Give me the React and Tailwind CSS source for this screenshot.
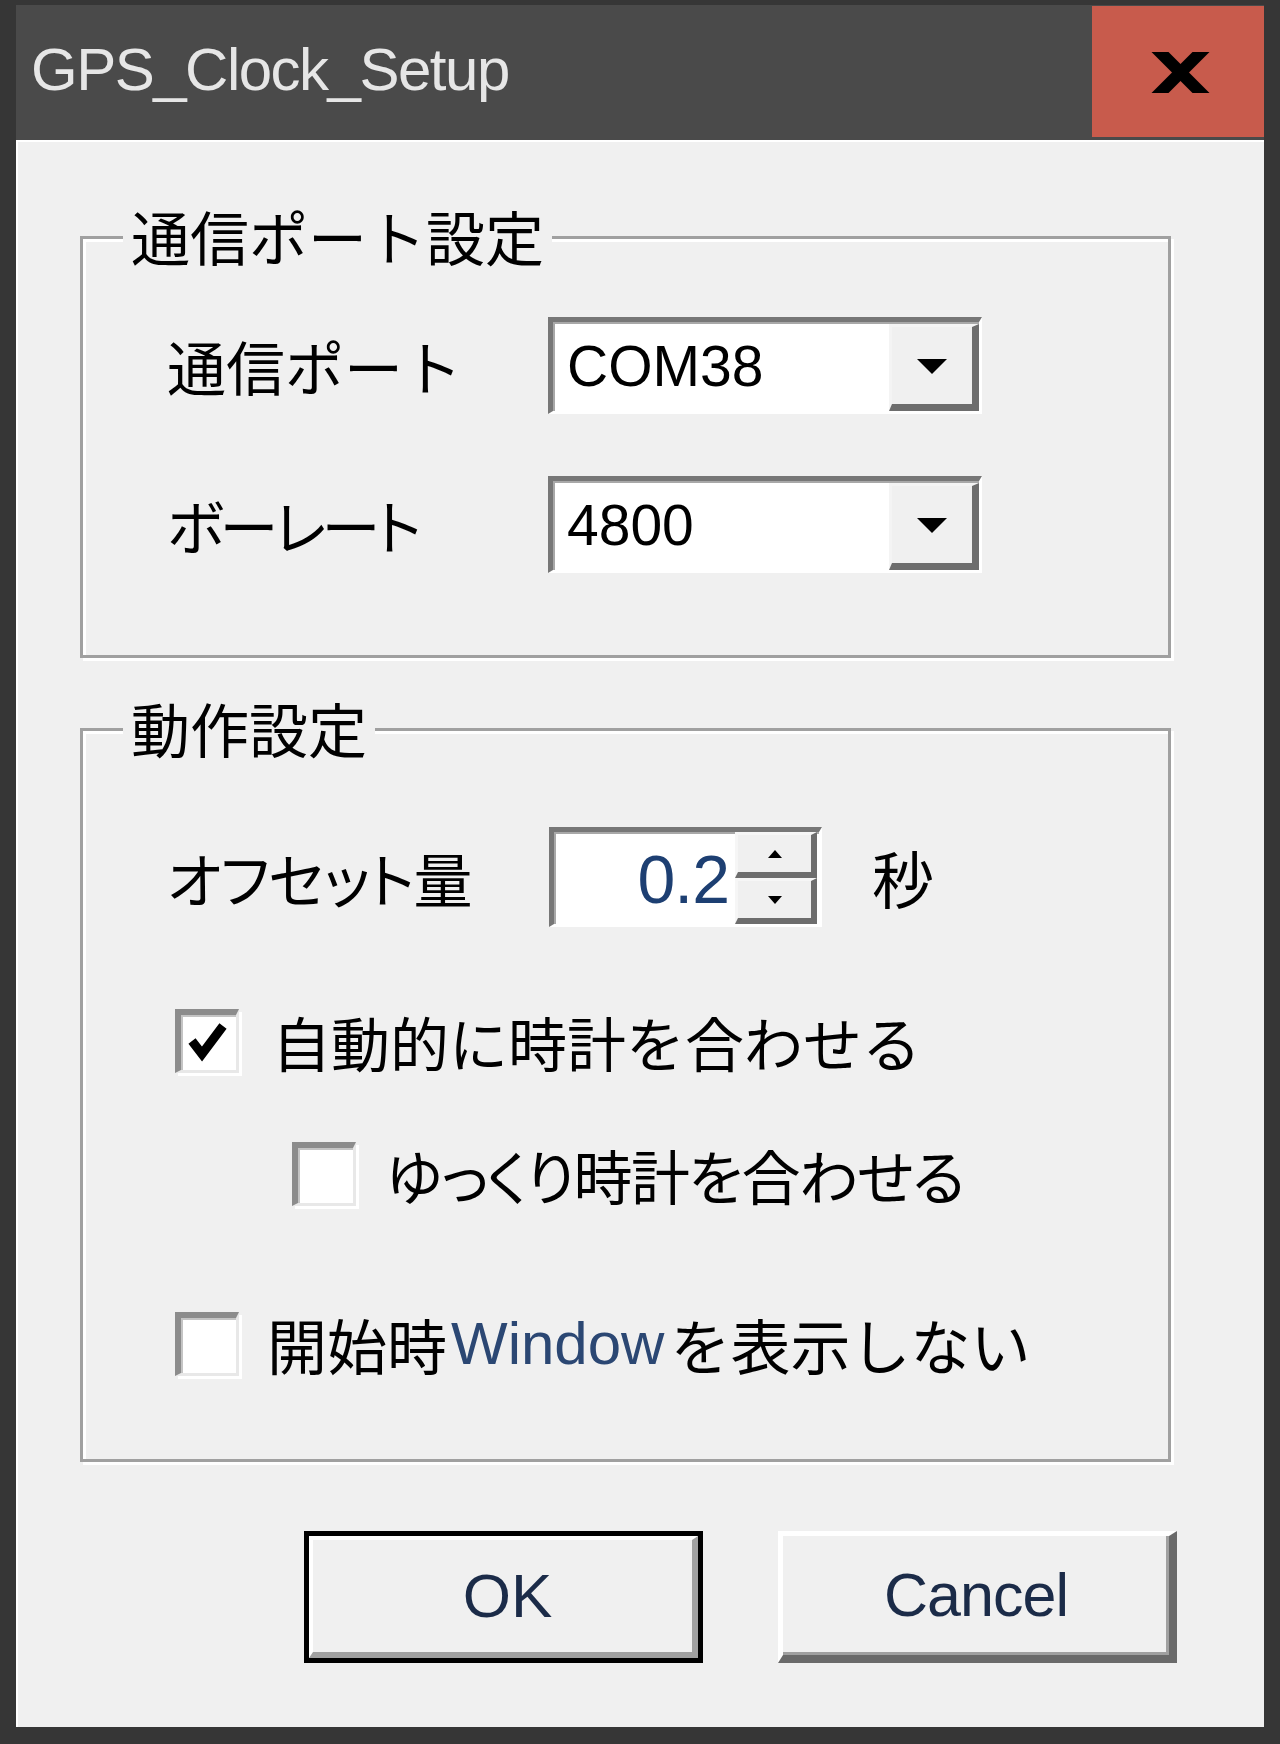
const CJK = "font-['Noto_Sans_CJK_JP',sans-serif] font-normal text-black leading-none";
const LAT = "font-['Liberation_Sans',sans-serif] leading-none";

function Arrow({ w = 30, h = 15 }) {
  return (
    <svg width={w} height={h} viewBox={`0 0 ${w} ${h}`}>
      <polygon points={`0,0 ${w},0 ${w / 2},${h}`} fill="#000" />
    </svg>
  );
}

function Combo({ value }) {
  return (
    <div className="w-[434px] h-[97px] flex bg-white border-t-[5px] border-l-[5px] border-t-[#777777] border-l-[#777777] border-b-[3px] border-r-[3px] border-b-white border-r-white shadow-[inset_2px_2px_0_#a8a8a8]">
      <div className={`flex-1 flex items-center pl-[14px] text-[57px] text-black ${LAT}`}>{value}</div>
      <div className="w-[90px] mt-[2px] bg-[#f0f0f0] border-t-[3px] border-l-[3px] border-t-[#f4f4f4] border-l-[#f4f4f4] border-b-[7px] border-r-[7px] border-b-[#6d6d6d] border-r-[#6d6d6d] flex items-center justify-center">
        <div className="mt-[2px]">
          <Arrow w={30} h={15} />
        </div>
      </div>
    </div>
  );
}

function Spin({ value }) {
  return (
    <div className="w-[273px] h-[100px] flex bg-white border-t-[5px] border-l-[5px] border-t-[#777777] border-l-[#777777] border-b-[3px] border-r-[3px] border-b-white border-r-white shadow-[inset_2px_2px_0_#a8a8a8]">
      <div className={`flex-1 flex items-center justify-end pr-[6px] pt-[2px] text-[68px] tracking-[-1px] text-[#1d3f72] ${LAT}`}>{value}</div>
      <div className="w-[82px] flex flex-col mr-[2px]">
        <div className="flex-1 bg-[#f0f0f0] border-t-[3px] border-l-[3px] border-t-[#f6f6f6] border-l-[#f6f6f6] border-b-[6px] border-r-[6px] border-b-[#6d6d6d] border-r-[#6d6d6d] flex items-center justify-center">
          <svg width="14" height="8" viewBox="0 0 14 8">
            <polygon points="0,8 14,8 7,0" fill="#000" />
          </svg>
        </div>
        <div className="flex-1 bg-[#f0f0f0] border-t-[3px] border-l-[3px] border-t-[#f6f6f6] border-l-[#f6f6f6] border-b-[6px] border-r-[6px] border-b-[#6d6d6d] border-r-[#6d6d6d] flex items-center justify-center">
          <svg width="14" height="8" viewBox="0 0 14 8">
            <polygon points="0,0 14,0 7,8" fill="#000" />
          </svg>
        </div>
      </div>
    </div>
  );
}

function CheckBox({ checked }) {
  return (
    <div className="w-[64px] h-[64px] shrink-0 bg-white border-t-[6px] border-l-[6px] border-t-[#8c8c8c] border-l-[#8c8c8c] border-b-[3px] border-r-[3px] border-b-[#e8e8e8] border-r-[#e8e8e8] shadow-[inset_2px_2px_0_#c4c4c4,3px_3px_0_#ffffff] relative">
      {checked && (
        <svg className="absolute left-0 top-0" width="55" height="55" viewBox="0 0 55 55">
          <polyline points="11,26 21,39 42,11" fill="none" stroke="#000" strokeWidth="9" strokeLinejoin="miter" />
        </svg>
      )}
    </div>
  );
}

function GroupBox({ title, className, children }) {
  return (
    <div className={`relative w-[1091px] border-[3px] border-[#a0a0a0] shadow-[inset_3px_3px_0_#ffffff,3px_3px_0_#ffffff] ${className}`}>
      <div className={`absolute left-[40px] top-[-33px] px-[8px] bg-[#f0f0f0] text-[59px] ${CJK}`}>{title}</div>
      {children}
    </div>
  );
}

export default function App() {
  return (
    <div className="w-[1280px] h-[1744px] bg-[#363636] pt-[5px] px-[16px] pb-[17px] flex flex-col">
      {/* Title bar */}
      <div className="h-[135px] bg-[#4a4a4a] flex items-stretch justify-between">
        <div className={`flex items-center pl-[15px] pb-[6px] text-[60px] tracking-[-1.5px] text-[#e6e6e6] ${LAT}`}>GPS_Clock_Setup</div>
        <div className="w-[172px] h-[131px] mt-[1px] bg-[#c85b4c] flex items-center justify-center">
          <svg width="172" height="131" viewBox="0 0 172 131">
            <defs>
              <clipPath id="xclip">
                <rect x="50" y="46" width="80" height="41" />
              </clipPath>
            </defs>
            <g clipPath="url(#xclip)" stroke="#000" strokeWidth="12">
              <line x1="62" y1="40" x2="115" y2="93" />
              <line x1="115" y1="40" x2="62" y2="93" />
            </g>
          </svg>
        </div>
      </div>

      {/* Client area */}
      <div className="flex-1 bg-[#f0f0f0] shadow-[inset_2px_2px_0_#ffffff] flex flex-col pl-[64px] pt-[96px]">
        <GroupBox title="通信ポート設定" className="h-[422px]">
          <div className="flex flex-col pt-[78px] pl-[84px] gap-[62px]">
            <div className="flex items-center">
              <div className={`w-[381px] text-[59px] ${CJK}`}>通信ポート</div>
              <Combo value="COM38" />
            </div>
            <div className="flex items-center">
              <div className={`w-[381px] text-[59px] tracking-[-4px] ${CJK} [font-feature-settings:'palt']`}>ボーレート</div>
              <Combo value="4800" />
            </div>
          </div>
        </GroupBox>

        <GroupBox title="動作設定" className="h-[734px] mt-[70px]">
          <div className="flex flex-col pt-[96px]">
            <div className="flex items-center pl-[84px] h-[100px]">
              <div className={`w-[382px] text-[59px] tracking-[-1px] ${CJK} [font-feature-settings:'palt']`}>オフセット量</div>
              <Spin value="0.2" />
              <div className={`ml-[50px] text-[62px] ${CJK}`}>秒</div>
            </div>

            <div className="flex items-center pl-[92px] mt-[82px] h-[64px]">
              <CheckBox checked />
              <div className={`ml-[33px] text-[59px] ${CJK}`}>自動的に時計を合わせる</div>
            </div>

            <div className="flex items-center pl-[209px] mt-[69px] h-[64px]">
              <CheckBox />
              <div className={`ml-[30px] text-[59px] tracking-[-1.5px] ${CJK} [font-feature-settings:'palt']`}>ゆっくり時計を合わせる</div>
            </div>

            <div className="flex items-center pl-[92px] mt-[106px] h-[64px]">
              <CheckBox />
              <div className={`ml-[28px] flex items-center text-[60px] ${CJK}`}>
                <span>開始時</span>
                <span className={`text-[60px] text-[#2b4773] ml-[4px] mr-[6px] ${LAT}`}>Window</span>
                <span>を表示しない</span>
              </div>
            </div>
          </div>
        </GroupBox>

        <div className="flex mt-[69px] pl-[224px] gap-[75px]">
          <div className="w-[399px] h-[132px] border-[5px] border-black">
            <div className="w-full h-full bg-[#f0f0f0] border-t-[4px] border-l-[4px] border-t-white border-l-white border-b-[6px] border-r-[6px] border-b-[#a0a0a0] border-r-[#a0a0a0] flex items-center justify-center pl-[10px]">
              <span className={`text-[62px] text-[#1b2b48] ${LAT}`}>OK</span>
            </div>
          </div>
          <div className="w-[399px] h-[132px] bg-[#f0f0f0] border-t-[5px] border-l-[5px] border-t-white border-l-white border-b-[8px] border-r-[8px] border-b-[#6a6a6a] border-r-[#6a6a6a] shadow-[inset_-3px_-3px_0_#a0a0a0] flex items-center justify-center">
            <span className={`text-[61px] tracking-[-1px] text-[#1b2b48] ${LAT}`}>Cancel</span>
          </div>
        </div>
      </div>
    </div>
  );
}
